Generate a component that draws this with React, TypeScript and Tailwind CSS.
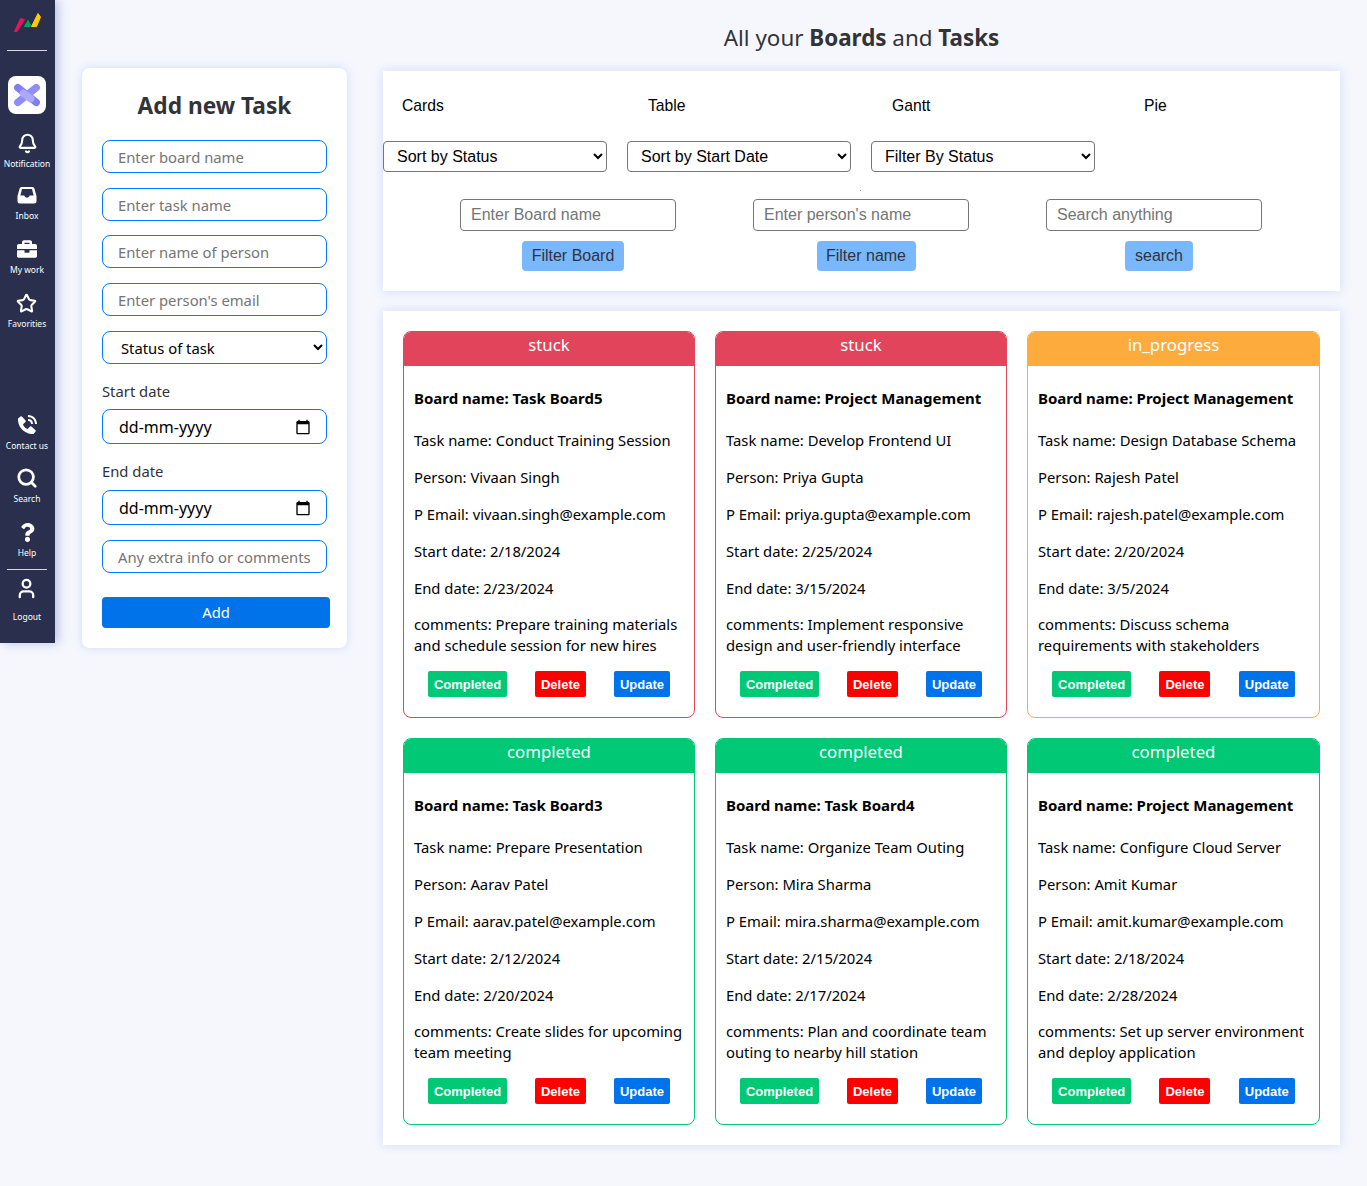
import React from 'react';
import { Bell, Star, Search, User } from 'lucide-react';
import { FaBriefcase, FaQuestion } from 'react-icons/fa';
import { BiSolidPhoneCall } from 'react-icons/bi';

const tasks = [
  { status: 'stuck', board: 'Task Board5', task: 'Conduct Training Session', person: 'Vivaan Singh', email: 'vivaan.singh@example.com', start: '2/18/2024', end: '2/23/2024', comments: 'Prepare training materials and schedule session for new hires' },
  { status: 'stuck', board: 'Project Management', task: 'Develop Frontend UI', person: 'Priya Gupta', email: 'priya.gupta@example.com', start: '2/25/2024', end: '3/15/2024', comments: 'Implement responsive design and user-friendly interface' },
  { status: 'in_progress', board: 'Project Management', task: 'Design Database Schema', person: 'Rajesh Patel', email: 'rajesh.patel@example.com', start: '2/20/2024', end: '3/5/2024', comments: 'Discuss schema requirements with stakeholders' },
  { status: 'completed', board: 'Task Board3', task: 'Prepare Presentation', person: 'Aarav Patel', email: 'aarav.patel@example.com', start: '2/12/2024', end: '2/20/2024', comments: 'Create slides for upcoming team meeting' },
  { status: 'completed', board: 'Task Board4', task: 'Organize Team Outing', person: 'Mira Sharma', email: 'mira.sharma@example.com', start: '2/15/2024', end: '2/17/2024', comments: 'Plan and coordinate team outing to nearby hill station' },
  { status: 'completed', board: 'Project Management', task: 'Configure Cloud Server', person: 'Amit Kumar', email: 'amit.kumar@example.com', start: '2/18/2024', end: '2/28/2024', comments: 'Set up server environment and deploy application' },
];

const statusStyles: Record<string, { border: string; head: string }> = {
  stuck: { border: 'border-[#e2445c]', head: 'bg-[#e2445c]' },
  in_progress: { border: 'border-[#fdab3d]', head: 'bg-[#fdab3d]' },
  completed: { border: 'border-[#00c875]', head: 'bg-[#00c875]' },
};

const InboxIcon = () => (
  <svg width="20" height="18" viewBox="0 0 20 18">
    <path d="M4.5 1h11a2 2 0 0 1 1.9 1.5L19.5 10v5a2.5 2.5 0 0 1-2.5 2.5H3A2.5 2.5 0 0 1 .5 15v-5L2.600 2.500A2 2 0 0 1 4.500 1Z" fill="#fff" />
    <path d="M5 3h10l1.600 6.500h-3.800a2.900 2.900 0 0 1-5.600 0H3.400Z" fill="#292f4c" />
  </svg>
);

const SideItem = ({ icon, label, className, labelClass }: { icon: React.ReactNode; label: string; className?: string; labelClass?: string }) => (
  <div className={`flex flex-col items-center text-white ${className ?? ''}`}>
    <div className="h-[24px] flex items-center justify-center">{icon}</div>
    <span className={`text-[8.5px] leading-[14px] whitespace-nowrap ${labelClass ?? 'mt-[2px]'}`}>{label}</span>
  </div>
);

const Sidebar = () => (
  <aside className="w-[55px] h-[643px] shrink-0 bg-[#292f4c] flex flex-col items-center pr-[1px] shadow-[3px_0_10px_rgba(60,90,190,0.35)]">
    <svg width="28" height="20" viewBox="0 0 28 20" className="mt-[12px]">
      <g strokeWidth="1" strokeLinejoin="round">
        <polygon points="1.500,19.500 7.500,6.500 11.500,7.500 4,19.500" fill="#e2175b" stroke="#e2175b" />
        <polygon points="11.500,14.500 15,8.500 17.500,13 17,14.500" fill="#00a651" stroke="#00a651" />
        <polygon points="18.500,14.500 25,1.500 27.500,5 23.500,14.500" fill="#ffcb00" stroke="#ffcb00" />
      </g>
    </svg>
    <div className="w-[40px] h-[1px] bg-[#d5d8df] mt-[18px]" />
    <div className="w-[38px] h-[38px] rounded-[8px] bg-white mt-[25px] flex items-center justify-center">
      <svg width="28" height="24" viewBox="0 0 30 26">
        <g strokeWidth="8" strokeLinecap="round">
          <path d="M5 5 L25 21" stroke="#7f7ef5" />
          <path d="M25 5 L5 21" stroke="#8f8ef8" />
          <path d="M11 11 L19 17" stroke="#aaa9fb" />
        </g>
      </svg>
    </div>
    <SideItem className="mt-[17px]" icon={<Bell size={21} strokeWidth={2.4} />} label="Notification" />
    <SideItem className="mt-[12px]" icon={<InboxIcon />} label="Inbox" />
    <SideItem className="mt-[14px]" icon={<FaBriefcase size={20} />} label="My work" />
    <SideItem className="mt-[14px]" icon={<Star size={21} strokeWidth={2.4} />} label="Favorities" />
    <SideItem className="mt-[82px]" icon={<BiSolidPhoneCall size={24} />} label="Contact us" />
    <SideItem className="mt-[13px]" icon={<Search size={22} strokeWidth={3} />} label="Search" />
    <SideItem className="mt-[14px]" icon={<FaQuestion size={19} />} label="Help" />
    <div className="w-[40px] h-[1px] bg-[#d5d8df] mt-[9px]" />
    <SideItem className="mt-[6px]" labelClass="mt-[10px]" icon={<User size={23} strokeWidth={2.4} />} label="Logout" />
  </aside>
);

const fieldClass = 'w-[225px] h-[33px] border border-[#007bff] rounded-[8px] bg-white px-[15px] text-[14.8px] outline-none placeholder:text-[#757575]';

const DateField = ({ className }: { className?: string }) => (
  <div className={`relative w-[225px] h-[35px] ${className ?? ''}`}>
    <input readOnly value="dd-mm-yyyy" className="w-full h-full border border-[#007bff] rounded-[8px] bg-white pl-[16px] text-[16px] text-black outline-none" />
    {/* same glyph the browser draws for a date picker */}
    <svg width="16" height="16" viewBox="0 0 24 24" className="absolute right-[16px] top-[10px]">
      <path d="M20 3h-1V1h-2v2H7V1H5v2H4c-1.100 0-2 .9-2 2v16c0 1.100.9 2 2 2h16c1.100 0 2-.9 2-2V5c0-1.100-.9-2-2-2zm0 18H4V8h16v13z" fill="#000" />
    </svg>
  </div>
);

const AddTask = () => (
  <div className="w-[265px] h-[580px] ml-[27px] mt-[68px] shrink-0 bg-white rounded-[8px] shadow-[0_0_10px_rgba(80,110,220,0.2)] pt-[22px] px-[20px]">
    <h2 className="text-[22.7px] leading-[32px] font-bold text-[#323338] text-center">Add new Task</h2>
    <div className="flex flex-col mt-[18px]">
      <input className={fieldClass} placeholder="Enter board name" />
      <input className={`${fieldClass} mt-[15px]`} placeholder="Enter task name" />
      <input className={`${fieldClass} mt-[14px]`} placeholder="Enter name of person" />
      <input className={`${fieldClass} mt-[15px]`} placeholder="Enter person's email" />
      <select className={`${fieldClass} mt-[15px] text-black pl-[14px] pr-[6px]`} defaultValue="s">
        <option value="s">Status of task</option>
      </select>
      <label className="text-[14.8px] leading-[21px] text-[#323338] mt-[17px]">Start date</label>
      <DateField className="mt-[7px]" />
      <label className="text-[14.8px] leading-[21px] text-[#323338] mt-[17px]">End date</label>
      <DateField className="mt-[8px]" />
      <input className={`${fieldClass} mt-[15px]`} placeholder="Any extra info or comments" />
      <button className="w-[228px] h-[31px] mt-[24px] bg-[#0073ea] text-white rounded-[4px] text-[14.8px]">Add</button>
    </div>
  </div>
);

const selectClass = 'w-[224px] h-[31px] border border-[#767676] rounded-[4px] bg-white pl-[9px] text-[16px] text-black';

const FilterGroup = ({ placeholder, label, className }: { placeholder: string; label: string; className: string }) => (
  <div className="w-[216px] flex flex-col items-center">
    <input className="w-[216px] h-[32px] border border-[#767676] rounded-[4px] px-[10px] text-[16px] outline-none placeholder:text-[#757575]" placeholder={placeholder} />
    <button className={`h-[30px] mt-[10px] ml-[10px] rounded-[4px] bg-[#79b8ff] text-[16px] text-[#323338] ${className}`}>{label}</button>
  </div>
);

const Controls = () => (
  <section className="h-[220px] mt-[17px] bg-white shadow-[0_0_10px_rgba(80,110,220,0.2)] font-['Liberation_Sans',sans-serif]">
    <div className="flex pt-[25px] text-[15.7px] leading-[20px] text-black">
      <span className="ml-[19px] w-[246px]">Cards</span>
      <span className="w-[244px]">Table</span>
      <span className="w-[252px]">Gantt</span>
      <span>Pie</span>
    </div>
    <div className="flex gap-[20px] mt-[25px]">
      <select className={selectClass}><option>Sort by Status</option></select>
      <select className={selectClass}><option>Sort by Start Date</option></select>
      <select className={selectClass}><option>Filter By Status</option></select>
    </div>
    <div className="w-[1px] h-[1px] bg-[#999] ml-[477px] mt-[18px]" />
    <div className="flex mt-[8px] ml-[77px] gap-[77px]">
      <FilterGroup placeholder="Enter Board name" label="Filter Board" className="w-[102px]" />
      <FilterGroup placeholder="Enter person's name" label="Filter name" className="w-[99px]" />
      <FilterGroup placeholder="Search anything" label="search" className="w-[68px]" />
    </div>
  </section>
);

const TaskCard = ({ t }: { t: (typeof tasks)[number] }) => {
  const s = statusStyles[t.status];
  return (
    <div className={`h-[387px] border ${s.border} rounded-[8px] bg-white overflow-hidden flex flex-col text-black`}>
      <div className={`${s.head} h-[34px] shrink-0 text-center text-white text-[16.8px] leading-[26px]`}>{t.status}</div>
      <div className="px-[10px] text-[14.8px] leading-[21px] flex flex-col flex-1">
        <p className="font-bold text-[15px] mt-[22px]">Board name: {t.board}</p>
        <p className="mt-[21px]">Task name: {t.task}</p>
        <p className="mt-[16px]">Person: {t.person}</p>
        <p className="mt-[16px]">P Email: {t.email}</p>
        <p className="mt-[16px]">Start date: {t.start}</p>
        <p className="mt-[16px]">End date: {t.end}</p>
        <p className="mt-[15px]">comments: {t.comments}</p>
        <div className="flex justify-around mt-[15px] font-['Liberation_Sans',sans-serif] text-[13px] font-bold text-white">
          <span className="h-[26px] w-[79px] rounded-[2px] bg-[#00c875] flex items-center justify-center">Completed</span>
          <span className="h-[26px] w-[51px] rounded-[2px] bg-[#ff0000] flex items-center justify-center">Delete</span>
          <span className="h-[26px] w-[56px] rounded-[2px] bg-[#0073ea] flex items-center justify-center">Update</span>
        </div>
      </div>
    </div>
  );
};

export default function App() {
  return (
    <div className="w-[1367px] h-[1186px] bg-[#f5f7fd] flex items-start font-['Noto_Sans',sans-serif] overflow-hidden">
      <Sidebar />
      <AddTask />
      <main className="w-[957px] ml-[36px] shrink-0">
        <h1 className="text-[22.4px] leading-[32px] text-[#323338] text-center mt-[22px]">
          All your <b>Boards</b> and <b>Tasks</b>
        </h1>
        <Controls />
        <section className="mt-[20px] bg-white p-[20px] grid grid-cols-[292px_292px_293px] gap-[20px] shadow-[0_0_10px_rgba(80,110,220,0.2)]">
          {tasks.map((t) => <TaskCard key={t.email} t={t} />)}
        </section>
      </main>
    </div>
  );
}
